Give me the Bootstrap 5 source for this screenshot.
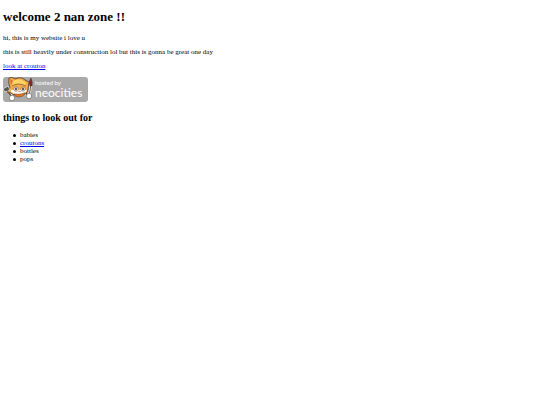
<!DOCTYPE html>
<html lang="en">
<head>
<meta charset="utf-8">
<meta name="viewport" content="width=device-width, initial-scale=1">
<title>nan zone</title>
<link href="https://cdn.jsdelivr.net/npm/bootstrap@5.3.0/dist/css/bootstrap.min.css" rel="stylesheet">
<style>
body { font-family: "Liberation Serif", "Times New Roman", serif; font-size: 7px; line-height: 8px; color: #000; background: #fff; }
main { padding: 9px 3px; }
h1 { font-size: 13px; line-height: 16px; margin-bottom: 9px; }
h2 { font-size: 10px; line-height: 12px; margin: 10px 0 7px; }
p { margin-bottom: 6px; }
a, a:hover { color: #0000ee; }
.things { padding-left: 10px; }
.things li { display: flex; align-items: center; gap: 4px; }
.things li::before { content: ""; width: 3px; height: 3px; border-radius: 50%; background: #000; }
.host-badge { padding-top: 1px; }
.host-badge svg { width: 85px; height: 25px; }
.host-badge text { font-family: Lato, sans-serif; fill: #fff; }
</style>
</head>
<body>
<main>
<h1 class="fw-bold">welcome 2 nan zone !!</h1>
<p>hi, this is my website i love u</p>
<p>this is still heavily under construction lol but this is gonna be great one day</p>
<p><a href="#crouton">look at crouton</a></p>
<a class="host-badge d-block" href="#neocities" aria-label="hosted by neocities">
<svg class="d-block" viewBox="0 0 85 25" aria-hidden="true">
<rect width="85" height="25" rx="3" fill="#a9a9a9"/>
<!-- arms -->
<path d="M5 13L9 20M23 16L25 19" stroke="#fff" stroke-width="3" stroke-linecap="round"/>
<path d="M4 13L8 19M23 16L25 19" stroke="#493d35" stroke-width="1.5" stroke-linecap="round"/>
<!-- cat head -->
<path d="M6 1Q9 -1 12 2Q18 -1 22 3L26 5L25 12Q25 17 19 18Q11 19 8 16L4 15L7 11Q5 6 6 1Z" fill="#f4ab48" stroke="#5d4835" stroke-width=".9"/>
<path d="M10 4Q17 0 23 6L22 9Q15 5 9 9Z" fill="#fbd465"/>
<path d="M7 2L10 4L8 8Z" fill="#d8732d"/>
<path d="M9 9Q15 5 23 9" fill="none" stroke="#8b572a" stroke-width=".8"/>
<path d="M8 13Q13 12 16 13Q20 12 24 13Q23 16 18 17Q11 18 8 15Z" fill="#fffaf0"/>
<ellipse cx="13" cy="12" rx="2.2" ry="2.3" fill="#fff" stroke="#654935" stroke-width=".5"/>
<ellipse cx="20" cy="12" rx="2.1" ry="2.2" fill="#fff" stroke="#654935" stroke-width=".5"/>
<ellipse cx="13" cy="12" rx=".9" ry="1.4" fill="#463127"/>
<ellipse cx="20" cy="12" rx=".9" ry="1.4" fill="#463127"/>
<path d="M15 14H18L17 15Z" fill="#b65430"/>
<path d="M11 17Q16 18 22 16L20 19Q16 21 12 19Z" fill="#e87520" stroke="#5d4835" stroke-width=".5"/>
<!-- hammer -->
<path d="M0 12L5 9L7 13L2 15Z" fill="#5a5754" stroke="#fff" stroke-width=".6"/>
<path d="M4 13L9 21" stroke="#81603e"/>
<!-- paintbrush -->
<path d="M28 7L26 20" stroke="#fff" stroke-width="2.2"/>
<path d="M28 7L26 20" stroke="#655646"/>
<path d="M27 9Q25 5 28 1Q30 5 29 9Z" fill="#8b2431" stroke="#4f3030" stroke-width=".5"/>
<ellipse cx="9" cy="21" rx="2.7" ry="2.8" fill="#fff" stroke="#62564a" stroke-width=".6"/>
<ellipse cx="26" cy="19" rx="2.6" ry="2.8" fill="#fff" stroke="#62564a" stroke-width=".6"/>
<text x="32" y="8" font-size="6">hosted by</text>
<text x="32" y="20" font-size="12">neocities</text>
</svg>
</a>
<h2 class="fw-bold">things to look out for</h2>
<ul class="things mb-0">
<li>babies</li>
<li><a href="#croutons">croutons</a></li>
<li>bottles</li>
<li>pops</li>
</ul>
</main>
<script src="https://cdn.jsdelivr.net/npm/bootstrap@5.3.0/dist/js/bootstrap.bundle.min.js"></script>
</body>
</html>
